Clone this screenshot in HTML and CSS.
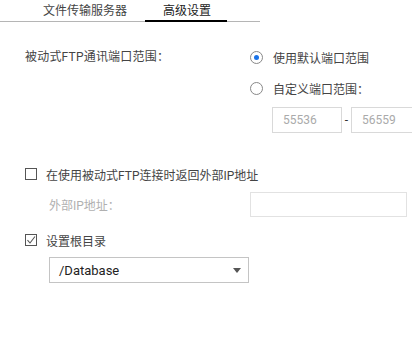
FILE: index.html
```html
<!DOCTYPE html>
<html lang="zh-CN">
<head>
  <meta charset="UTF-8" />
  <title>高级设置</title>
  <link rel="stylesheet" href="styles.css">
</head>
<body>

<div class="tabs">
  <div class="tab" id="tab-server">文件传输服务器</div>
  <div class="tab active" id="tab-advanced">高级设置</div>
</div>

<div class="panel">
  <div class="port-row">
    <div class="port-label">被动式FTP通讯端口范围：</div>
    <div class="port-options">
      <label class="radio">
        <span class="radio-dot checked"></span>
        <span>使用默认端口范围</span>
      </label>
      <label class="radio">
        <span class="radio-dot"></span>
        <span>自定义端口范围：</span>
      </label>
      <div class="range">
        <div class="text-box small">55536</div>
        <span class="dash">-</span>
        <div class="text-box small">56559</div>
      </div>
    </div>
  </div>

  <label class="check first">
    <span class="check-box"></span>
    <span>在使用被动式FTP连接时返回外部IP地址</span>
  </label>
  <div class="ip-row">
    <div class="ip-label">外部IP地址：</div>
    <div class="text-box wide"></div>
  </div>

  <label class="check">
    <span class="check-box">
      <svg width="12" height="12" viewBox="0 0 12 12"><path d="M2.5 6.2 L5 9 L10 2.5" fill="none" stroke="#555" stroke-width="1.1"/></svg>
    </span>
    <span>设置根目录</span>
  </label>
  <div class="select">
    <span>/Database</span>
    <span class="caret"></span>
  </div>
</div>

</body>
</html>
```

FILE: styles.css
```css
body {
  margin: 0;
  font-family: Roboto, "Noto Sans CJK SC", sans-serif;
  font-size: 12px;
  color: #444;
  background: #fff;
  width: 412px;
  height: 352px;
  overflow: hidden;
}

.tabs {
  display: flex;
  width: 235px;
  height: 21px;
  border-bottom: 1px solid #b5b5b5;
  padding-left: 25px;
}

.tab {
  line-height: 22px;
  padding: 0 18px;
  margin-bottom: -1px;
}

.tab.active {
  color: #222;
  border-bottom: 2px solid #000;
  height: 20px;
  padding: 0 16px 0 18px;
}

.panel {
  padding: 25px 0 0 25px;
}

.port-row {
  display: flex;
}

.port-label {
  width: 225px;
  flex-shrink: 0;
  line-height: 20px;
  letter-spacing: 0.2px;
}

.port-options {
  display: flex;
  flex-direction: column;
  flex-shrink: 0;
}

.radio {
  display: flex;
  align-items: center;
  gap: 10px;
  height: 20px;
  margin-bottom: 11px;
}

.radio-dot {
  width: 11px;
  height: 11px;
  border: 1px solid #888;
  border-radius: 50%;
  position: relative;
}

.radio-dot.checked::after {
  content: "";
  position: absolute;
  left: 3px;
  top: 3px;
  width: 5px;
  height: 5px;
  border-radius: 50%;
  background: #1a73e8;
}

.range {
  display: flex;
  align-items: center;
  margin-left: 22px;
  margin-top: -2px;
}

.text-box {
  border: 1px solid #d9d9d9;
  box-sizing: border-box;
  color: #aaa;
  display: flex;
  align-items: center;
  padding-left: 10px;
}

.text-box.small {
  width: 70px;
  height: 26px;
  flex-shrink: 0;
}

.dash {
  width: 9px;
  text-align: center;
  color: #333;
}

.check {
  display: flex;
  align-items: center;
  gap: 9px;
  height: 20px;
}

.check.first {
  margin-top: 31px;
}

.check-box {
  width: 12px;
  height: 12px;
  border: 1px solid #555;
  box-sizing: border-box;
  display: flex;
  align-items: center;
  justify-content: center;
}

.check-box svg {
  flex-shrink: 0;
}

.ip-row {
  display: flex;
  align-items: center;
  margin-top: 8px;
  margin-bottom: 13px;
}

.ip-label {
  width: 201px;
  padding-left: 24px;
  color: #b0b0b0;
}

.text-box.wide {
  width: 157px;
  height: 25px;
  border-color: #e2e2e2;
}

.select {
  margin: 7px 0 0 24px;
  width: 200px;
  height: 26px;
  border: 1px solid #c4c4c4;
  box-sizing: border-box;
  display: flex;
  align-items: center;
  justify-content: space-between;
  padding: 0 7px 0 9px;
  font-size: 13px;
  color: #222;
}

.caret {
  width: 0;
  height: 0;
  border-left: 4px solid transparent;
  border-right: 4px solid transparent;
  border-top: 5px solid #555;
}
```
